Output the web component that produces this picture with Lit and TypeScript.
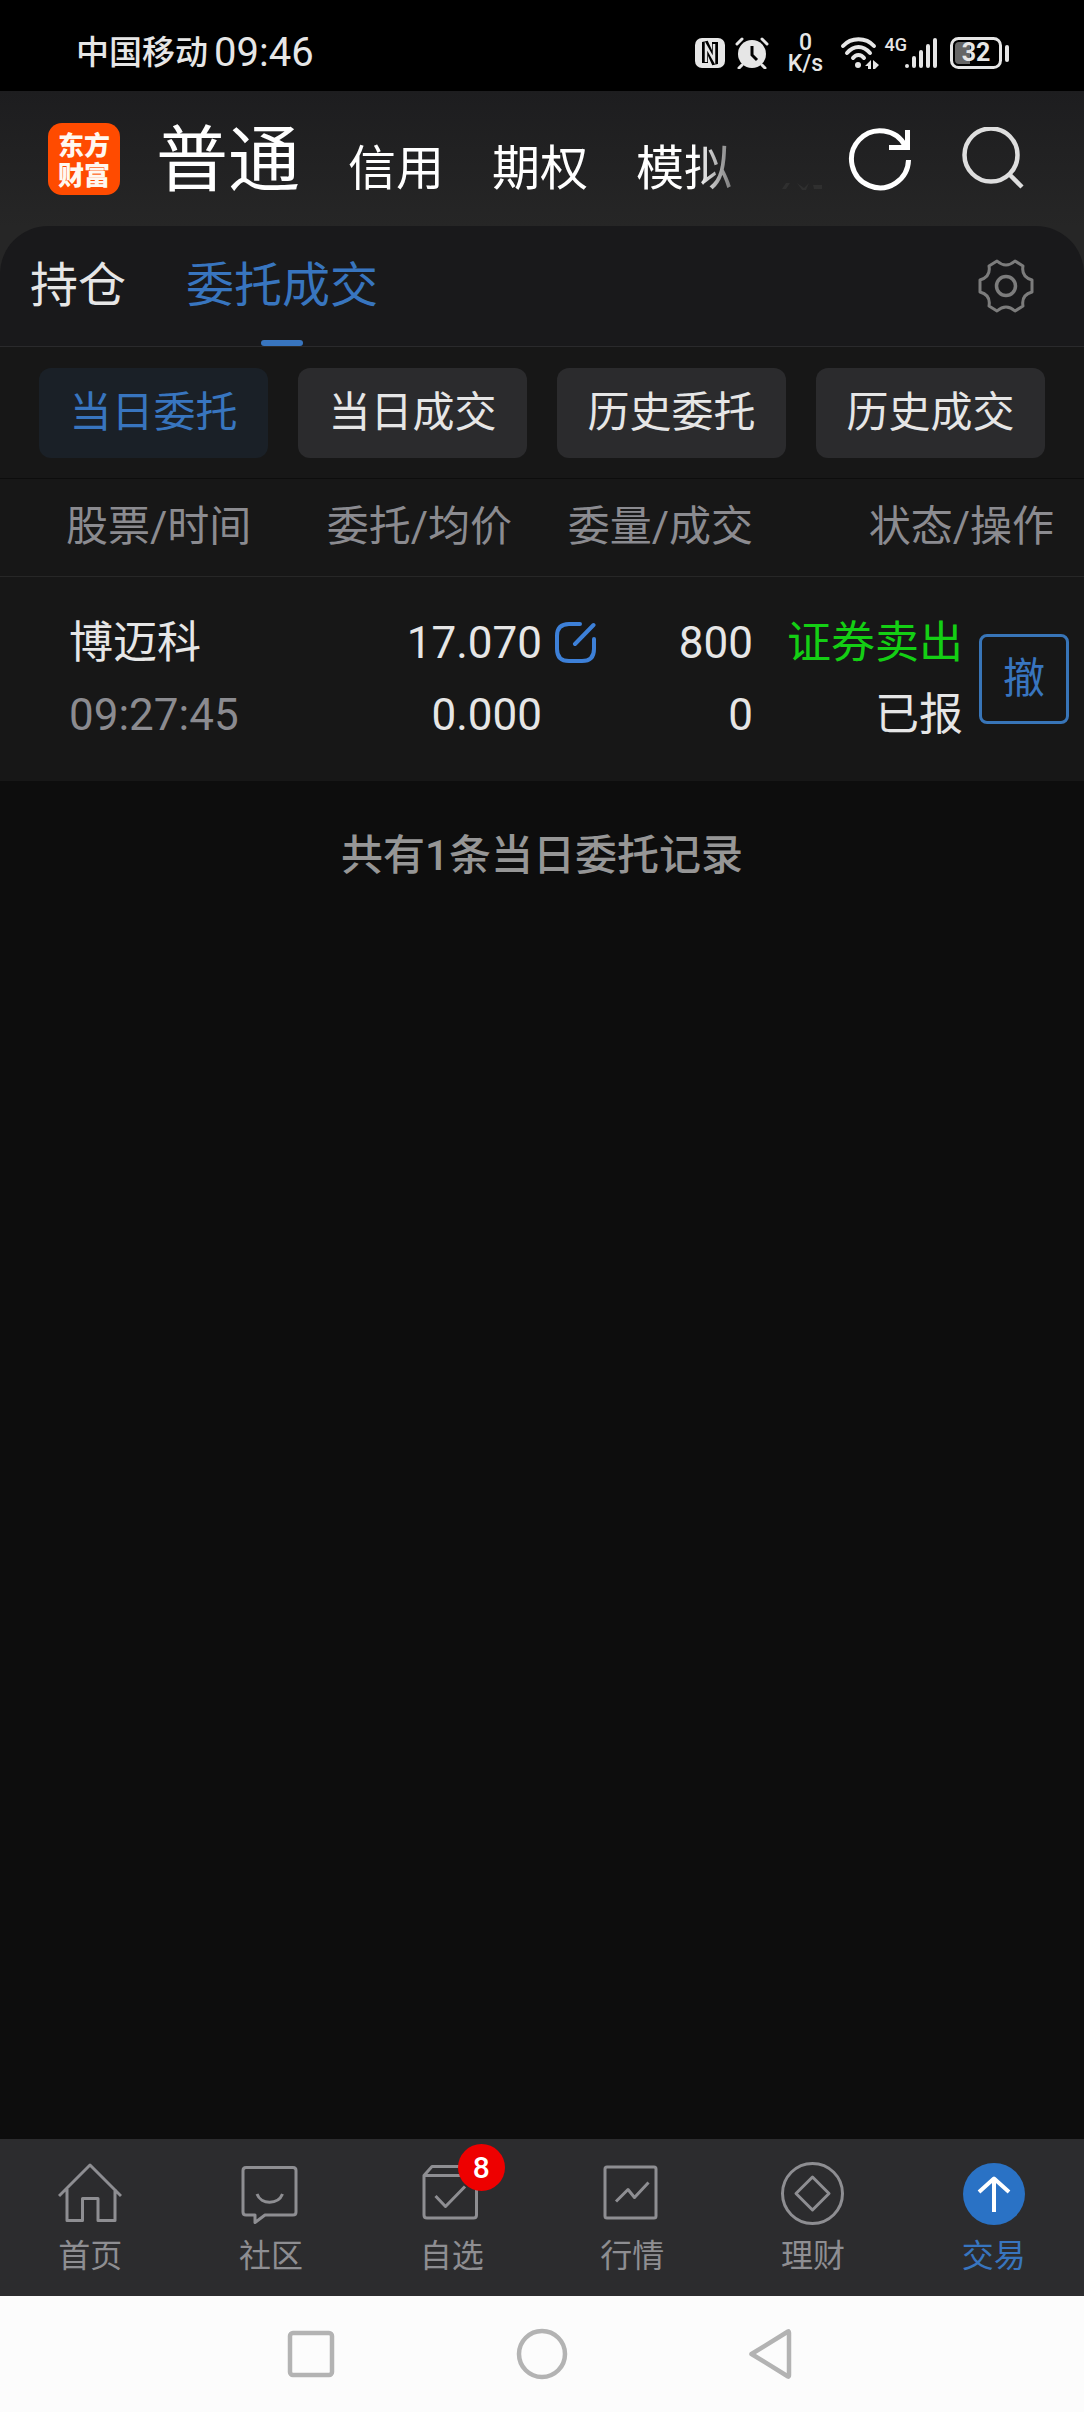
import { LitElement, html, css, svg } from "lit";
import { customElement, property, state } from "lit/decorators.js";
import { classMap } from "lit/directives/class-map.js";

const FONT = css`Roboto, "Noto Sans CJK SC", sans-serif`;

const reset = css`
  :host, * { box-sizing: border-box; }
  button { margin: 0; padding: 0; border: 0; background: none; font: inherit; color: inherit; cursor: pointer; }
  svg { display: block; flex: none; }
`;

@customElement("status-bar")
class StatusBar extends LitElement {
  static styles = [reset, css`
    :host { display: flex; align-items: center; height: 91px; padding: 15px 74px 0 76px; background: #000; color: #e6e6e6; }
    .carrier { font-size: 33px; line-height: 40px; font-weight: 500; }
    .time { margin-left: 6px; font-size: 40px; line-height: 40px; }
    .icons { display: flex; align-items: center; margin-left: auto; }
    .alarm { margin-left: 10px; }
    .speed { display: flex; flex-direction: column; width: 40px; margin-left: 17px; text-align: center; font-size: 23px; line-height: 21px; font-weight: 500; }
    .wifi { margin-left: 14px; }
    .net { align-self: flex-start; margin-left: 5px; font-size: 18px; line-height: 26px; font-weight: 500; }
    .bars { margin-left: -2px; }
    .battery { position: relative; margin-left: 12px; }
    .level { position: absolute; inset: 0 8px 0 0; text-align: center; font-size: 25px; line-height: 34px; font-weight: 700; }
  `];
  render() {
    return html`
      <span class="carrier">中国移动</span><span class="time">09:46</span>
      <div class="icons">
        <svg width="30" height="32" viewBox="0 0 30 32" aria-hidden="true">
          <rect x="0" y="1" width="30" height="30" rx="7" fill="#e6e6e6"/>
          <path d="M10 26V5L20 27V5" fill="none" stroke="#000" stroke-width="6"/>
          <path d="M11 25V9L19 23V7" fill="none" stroke="#e6e6e6" stroke-width="2.500"/>
        </svg>
        <svg class="alarm" width="34" height="32" viewBox="0 0 34 32" aria-hidden="true">
          <circle cx="17" cy="17" r="14" fill="#e6e6e6"/>
          <path d="M2 7L7 2M32 7L27 2M7 28L4 31M27 28L30 31" stroke="#e6e6e6" stroke-width="3" stroke-linecap="round"/>
          <path d="M17 9V18L22 23" fill="none" stroke="#000" stroke-width="3"/>
        </svg>
        <div class="speed"><span>0</span><span>K/s</span></div>
        <svg class="wifi" width="40" height="34" viewBox="0 0 40 34" aria-hidden="true">
          <g fill="none" stroke="#e6e6e6" stroke-width="4" stroke-linecap="round">
            <path d="M3 10C11 1 26 1 34 10"/><path d="M7 17C14 9 23 9 30 17"/><path d="M13 22C16 18 21 18 24 22"/>
          </g>
          <circle cx="18" cy="29" r="3" fill="#e6e6e6"/>
          <path d="M31 24V33H28V30H25ZM33 24L39 29L35 33H33Z" fill="#e6e6e6"/>
        </svg>
        <span class="net">4G</span>
        <svg class="bars" width="33" height="32" viewBox="0 0 33 32" aria-hidden="true">
          <path d="M2 29V29M9 29V21M16 29V15M23 29V9M30 29V3" stroke="#e6e6e6" stroke-width="4" stroke-linecap="round"/>
        </svg>
        <div class="battery">
          <svg width="60" height="34" viewBox="0 0 60 34" aria-hidden="true">
            <rect x="1.5" y="2.5" width="49" height="29" rx="7" fill="none" stroke="#e6e6e6" stroke-width="3"/>
            <path d="M9 6H20V28H9Q5 28 5 24V10Q5 6 9 6Z" fill="#666"/>
            <rect x="55" y="9" width="4" height="17" rx="2" fill="#e6e6e6"/>
          </svg>
          <span class="level">32</span>
        </div>
      </div>`;
  }
}

@customElement("account-header")
class AccountHeader extends LitElement {
  @state() current = 0;
  static styles = [reset, css`
    :host { display: flex; align-items: center; height: 135px; padding: 0 59px 0 48px; color: #fff; }
    .logo { flex: none; display: flex; flex-direction: column; width: 72px; height: 72px; padding: 6px 0; border-radius: 14px; background: #ff4b00; color: #fff8f0;
      font-family: "Noto Sans CJK SC", sans-serif; font-weight: 900; font-size: 26px; line-height: 30px; text-align: center; }
    .tabs { flex: 1; min-width: 0; display: flex; align-items: baseline; gap: 48px; margin-left: 36px; padding-top: 12px; overflow: hidden; white-space: nowrap;
      mask-image: linear-gradient(90deg, #000 calc(100% - 130px), transparent calc(100% - 70px)); }
    .tab { flex: none; font-size: 48px; line-height: 100px; }
    .tab.on { font-size: 72px; }
    .more { align-self: flex-end; margin: 0 0 36px -44px; }
    .tools { display: flex; gap: 49px; margin-left: 26px; }
  `];
  render() {
    return html`
      <div class="logo"><span>东方</span><span>财富</span></div>
      <nav class="tabs">
        ${["普通", "信用", "期权", "模拟"].map((t, i) => html`
          <button class=${classMap({ tab: true, on: i === this.current })} @click=${() => (this.current = i)}>${t}</button>`)}
      </nav>
      <svg class="more" width="40" height="8" viewBox="0 0 40 8" aria-hidden="true">
        <path d="M0 7L4 1H8L4 7ZM15 1L22 6L27 1L24 8H20ZM31 3H40V7H32Z" fill="#2f2f2f"/>
      </svg>
      <div class="tools">
        <button aria-label="刷新">
          <svg width="64" height="64" viewBox="0 0 64 64" fill="none" stroke="#fff" stroke-width="5">
            <path d="M60.5 33A28.5 28.5 0 1 1 57.5 19.500M59.500 3V20.500H41"/>
          </svg>
        </button>
        <button aria-label="搜索">
          <svg width="64" height="64" viewBox="0 0 64 64" fill="none" stroke="#dedede" stroke-width="4.5">
            <circle cx="30" cy="28" r="26.500"/><path d="M48 47L61 60"/>
          </svg>
        </button>
      </div>`;
  }
}

@customElement("order-panel")
class OrderPanel extends LitElement {
  @state() tab = 1;
  @state() filter = 0;
  @property({ attribute: false }) orders = [
    { name: "博迈科", time: "09:27:45", price: "17.070", avg: "0.000", qty: "800", done: "0", side: "证券卖出", status: "已报" },
  ];
  static styles = [reset, css`
    :host { display: block; color: #e6e6e6; }
    .top { display: flex; align-items: stretch; height: 121px; padding: 0 46px 0 30px; gap: 60px; background: #19191b;
      border-bottom: 1px solid #2a2a2c; border-radius: 48px 48px 0 0; }
    .tab { display: flex; flex-direction: column; align-items: center; justify-content: flex-end; gap: 18px; font-size: 48px; line-height: 72px; }
    .tab::after { content: ""; width: 42px; height: 6px; border-radius: 3px; }
    .tab.on { color: #3875bf; }
    .tab.on::after { background: #3875bf; }
    .gear { margin-left: auto; }
    .filters { display: flex; gap: 30px; padding: 21px 39px 20px; background: #171717; border-bottom: 1px solid #0d0d0d; }
    .filter { flex: 1; height: 90px; border-radius: 12px; background: #2b2b2d; font-size: 42px; line-height: 60px; }
    .filter.on { background: #1a2027; color: #3875bf; }
    table { width: 100%; table-layout: fixed; border-collapse: collapse; background: #171717; font-size: 44px; line-height: 72px; white-space: nowrap; }
    .c-price { width: 242px; } .c-edit { width: 54px; } .c-qty { width: 157px; } .c-status { width: 210px; } .c-act { width: 121px; }
    th { height: 97px; padding: 0; font-weight: 400; font-size: 42px; line-height: 60px; color: #8b8b90; text-align: right; border-bottom: 1px solid #272727; }
    .h-name { padding-left: 66px; text-align: left; }
    .h-price { padding-right: 30px; }
    .h-status { padding-right: 30px; }
    td { padding: 30px 0; text-align: right; vertical-align: top; }
    .name { padding-left: 69px; text-align: left; }
    .sub { color: #8b8b90; }
    .sell { color: #14cf14; }
    .edit { display: flex; align-items: center; height: 72px; margin-left: 13px; }
    .act { vertical-align: middle; padding: 0 15px 0 0; }
    .cancel { width: 90px; height: 90px; border: 3px solid #3875b8; border-radius: 8px; color: #3875bf; font-size: 42px; line-height: 60px; vertical-align: middle; }
    .total { margin: 0; padding: 45px 0; background: #0d0d0d; text-align: center; font-size: 42px; line-height: 60px; font-weight: 500; color: #969696; }
  `];
  render() {
    return html`
      <div class="top">
        ${["持仓", "委托成交"].map((t, i) => html`
          <button class=${classMap({ tab: true, on: i === this.tab })} @click=${() => (this.tab = i)}>${t}</button>`)}
        <button class="gear" aria-label="设置">
          <svg width="64" height="64" viewBox="-32 -32 64 64" fill="none" stroke="#7c7c7c" stroke-width="3" stroke-linejoin="round">
            <path d="M-9-25Q0-17 9-25L17-20Q15-9 26-6V6Q15 9 17 20L9 25Q0 17-9 25L-17 20Q-15 9-26 6V-6Q-15-9-17-20Z"/>
            <circle r="9.500" stroke-width="3.500"/>
          </svg>
        </button>
      </div>
      <div class="filters">
        ${["当日委托", "当日成交", "历史委托", "历史成交"].map((t, i) => html`
          <button class=${classMap({ filter: true, on: i === this.filter })} @click=${() => (this.filter = i)}>${t}</button>`)}
      </div>
      <table>
        <colgroup><col><col class="c-price"><col class="c-edit"><col class="c-qty"><col class="c-status"><col class="c-act"></colgroup>
        <thead><tr>
          <th class="h-name">股票/时间</th><th class="h-price">委托/均价</th>
          <th colspan="2">委量/成交</th><th class="h-status" colspan="2">状态/操作</th>
        </tr></thead>
        <tbody>
          ${this.orders.map((o) => html`<tr>
            <td class="name">${o.name}<div class="sub">${o.time}</div></td>
            <td>${o.price}<div>${o.avg}</div></td>
            <td><button class="edit" aria-label="改单">
              <svg width="41" height="41" viewBox="0 0 41 41" fill="none" stroke="#3d80d8" stroke-width="4" stroke-linecap="round">
                <path d="M25 2H14Q2 2 2 14V27Q2 39 14 39H27Q39 39 39 27V17M38.500 3L20 22"/>
              </svg></button></td>
            <td>${o.qty}<div>${o.done}</div></td>
            <td><span class="sell">${o.side}</span><div>${o.status}</div></td>
            <td class="act"><button class="cancel">撤</button></td>
          </tr>`)}
        </tbody>
      </table>
      <p class="total">共有${this.orders.length}条当日委托记录</p>`;
  }
}

const NAV = [
  { label: "首页", icon: svg`<path d="M1 34L32 3L63 34M9 27V58.500H24.500V36.500H40V58.500H57V27"/>` },
  { label: "社区", icon: svg`<path d="M7 5.500H54Q57 5.500 57 8.500V50Q57 53 54 53H26L16 60.500V53H7Q4 53 4 50V8.500Q4 5.500 7 5.500Z"/><path d="M18 32C22 43 39 43 43.500 32"/>` },
  { label: "自选", badge: "8", icon: svg`<path d="M4 13.500L12 4.500H48.500L56.500 13.500V53Q56.500 56 53.500 56H7Q4 56 4 53ZM4 13.500H56.500M15.500 34L25.500 44.500L45 24.500"/>` },
  { label: "行情", icon: svg`<rect x="5" y="5" width="51" height="51" rx="2"/><path d="M16 39.500L28 27.500L34.500 35.500L48.500 20.500"/>` },
  { label: "理财", icon: svg`<circle cx="31.500" cy="31.500" r="30"/><path d="M31.500 15L48 31.500L31.500 48L15 31.500Z"/>` },
  { label: "交易", icon: svg`<circle cx="32" cy="32" r="31" fill="#2a72c5" stroke="none"/><path d="M32 50V16M17 30L32 16.500L47 30" stroke="#fff" stroke-width="4"/>` },
];

@customElement("bottom-nav")
class BottomNav extends LitElement {
  static styles = [reset, css`
    :host { display: flex; background: #2c2c2e; }
    .item { flex: 1; display: flex; flex-direction: column; align-items: center; gap: 10px; padding: 23px 0 20px;
      color: #8e8e92; font-size: 32px; line-height: 40px; text-decoration: none; }
    .item.on { color: #3875bf; }
    .icon { position: relative; }
    .badge { position: absolute; left: 38px; top: -18px; width: 47px; height: 47px; border-radius: 50%; background: #ee0000;
      color: #fff; font-size: 30px; line-height: 47px; font-weight: 500; text-align: center; }
  `];
  render() {
    return NAV.map((n, i) => html`
      <a class=${classMap({ item: true, on: i === 5 })} href="#">
        <span class="icon">
          <svg width="64" height="64" viewBox="0 0 64 64" fill="none" stroke="currentColor" stroke-width="3" stroke-linejoin="round">${n.icon}</svg>
          ${n.badge ? html`<span class="badge">${n.badge}</span>` : null}
        </span>
        ${n.label}
      </a>`);
  }
}

@customElement("system-nav")
class SystemNav extends LitElement {
  static styles = [reset, css`
    :host { display: flex; align-items: center; justify-content: center; gap: 171px; height: 116px; background: #fcfcfc; }
  `];
  render() {
    const shapes = [
      ["最近任务", svg`<rect x="9" y="9" width="42" height="42" rx="3"/>`],
      ["主屏幕", svg`<circle cx="30" cy="30" r="23"/>`],
      ["返回", svg`<path d="M8.500 30L45 7.500Q46 7 46 9V51Q46 53 45 52.500Z"/>`],
    ];
    return shapes.map(([label, shape]) => html`
      <button aria-label=${label}>
        <svg width="60" height="60" viewBox="0 0 60 60" fill="none" stroke="#b3b3b3" stroke-width="4.500" stroke-linejoin="round">${shape}</svg>
      </button>`);
  }
}

@customElement("app-root")
class AppRoot extends LitElement {
  static styles = css`
    :host { display: flex; flex-direction: column; min-height: 100vh; background: #0d0d0d; font-family: ${FONT}; }
    .head { background: linear-gradient(#1d1d1f, #262626 136px); }
    main { flex: 1; }
  `;
  render() {
    return html`
      <status-bar></status-bar>
      <main>
        <div class="head"><account-header></account-header><order-panel></order-panel></div>
      </main>
      <bottom-nav></bottom-nav>
      <system-nav></system-nav>`;
  }
}
